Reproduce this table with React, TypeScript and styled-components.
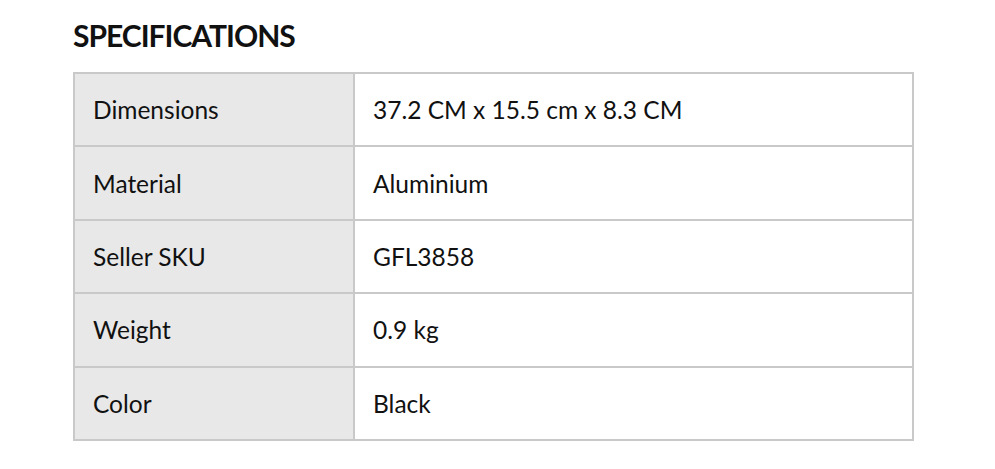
import React from "react";
import styled, { createGlobalStyle } from "styled-components";

const Global = createGlobalStyle`
  html, body { margin: 0; padding: 0; background: #ffffff; }
  body { font-family: "Lato", "Noto Sans", sans-serif; color: #111; }
`;

const Page = styled.div`
  padding: 18px 81px 0 73px;
`;

const Title = styled.h2`
  margin: 0 0 20px 0;
  font-family: "Lato", sans-serif;
  font-weight: 700;
  font-size: 30px;
  line-height: 34px;
  letter-spacing: -1px;
  color: #111;
`;

const Table = styled.table`
  width: 841px;
  table-layout: fixed;
  border-collapse: collapse;
  border: 2px solid #c9c9c9;
`;

const LabelCol = styled.col`
  width: 280px;
`;

const Row = styled.tr`
  height: 73.4px;
`;

const Cell = styled.td<{ $label?: boolean }>`
  border: 2px solid #c9c9c9;
  padding: 0 0 0 18px;
  font-size: 24.5px;
  color: #111;
  background: ${(p) => (p.$label ? "#e8e8e8" : "#ffffff")};
  vertical-align: middle;
  white-space: nowrap;
`;

const rows: [string, string][] = [
  ["Dimensions", "37.2 CM x 15.5 cm x 8.3 CM"],
  ["Material", "Aluminium"],
  ["Seller SKU", "GFL3858"],
  ["Weight", "0.9 kg"],
  ["Color", "Black"],
];

export default function App() {
  return (
    <>
      <Global />
      <Page>
        <Title>SPECIFICATIONS</Title>
        <Table>
          <colgroup>
            <LabelCol />
            <col />
          </colgroup>
          <tbody>
            {rows.map(([k, v]) => (
              <Row key={k}>
                <Cell $label>{k}</Cell>
                <Cell>{v}</Cell>
              </Row>
            ))}
          </tbody>
        </Table>
      </Page>
    </>
  );
}
